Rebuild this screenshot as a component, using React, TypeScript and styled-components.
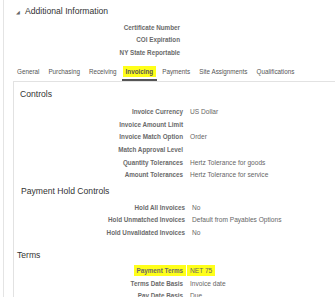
import styled, { createGlobalStyle } from 'styled-components';

const GlobalStyle = createGlobalStyle`
  html, body {
    margin: 0;
    padding: 0;
    background: #fff;
  }
  body {
    font-family: 'Liberation Sans', Arial, sans-serif;
    color: #444;
  }
`;

type Field = { label: string; value?: string; mark?: boolean };

const certFields: Field[] = [
  { label: 'Certificate Number' },
  { label: 'COI Expiration' },
  { label: 'NY State Reportable' },
];

const tabs = [
  'General',
  'Purchasing',
  'Receiving',
  'Invoicing',
  'Payments',
  'Site Assignments',
  'Qualifications',
];

const controls: Field[] = [
  { label: 'Invoice Currency', value: 'US Dollar' },
  { label: 'Invoice Amount Limit' },
  { label: 'Invoice Match Option', value: 'Order' },
  { label: 'Match Approval Level' },
  { label: 'Quantity Tolerances', value: 'Hertz Tolerance for goods' },
  { label: 'Amount Tolerances', value: 'Hertz Tolerance for service' },
];

const holds: Field[] = [
  { label: 'Hold All Invoices', value: 'No' },
  { label: 'Hold Unmatched Invoices', value: 'Default from Payables Options' },
  { label: 'Hold Unvalidated Invoices', value: 'No' },
];

const terms: Field[] = [
  { label: 'Payment Terms', value: 'NET 75', mark: true },
  { label: 'Terms Date Basis', value: 'Invoice date' },
  { label: 'Pay Date Basis', value: 'Due' },
];

type FieldsProps = { items: Field[]; labelWidth: number; step?: number; top?: number };

const Fields = ({ items, labelWidth, step = 12.5, top = 4 }: FieldsProps) => (
  <FieldGrid $labelWidth={labelWidth} $step={step} $top={top}>
    {items.map((f) => (
      <FieldRow key={f.label}>
        <Label>{f.mark ? <Mark>{f.label}</Mark> : f.label}</Label>
        <Value>{f.value && f.mark ? <Mark>{f.value}</Mark> : f.value}</Value>
      </FieldRow>
    ))}
  </FieldGrid>
);

const App = () => {
  return (
    <>
      <GlobalStyle />
      <Page>
        <Outer>
          <Header>
            <Caret>◢</Caret>
            Additional Information
          </Header>
          <Fields items={certFields} labelWidth={176} top={0} />
          <TabBar>
            {tabs.map((t) => (
              <Tab key={t} $active={t === 'Invoicing'}>
                {t === 'Invoicing' ? <Mark>{t}</Mark> : t}
              </Tab>
            ))}
          </TabBar>
          <Panel>
            <SectionTitle>Controls</SectionTitle>
            <Fields items={controls} labelWidth={169} step={12.6} top={6} />
            <SectionTitle $top={4} $indent={7}>Payment Hold Controls</SectionTitle>
            <Fields items={holds} labelWidth={171} />
            <SectionTitle $top={10} $indent={3}>Terms</SectionTitle>
            <Fields items={terms} labelWidth={169} />
          </Panel>
        </Outer>
      </Page>
    </>
  );
};

export default App;

const Page = styled.div`
  padding-left: 3px;
  height: 297px;
  overflow: hidden;
`;

const Outer = styled.div`
  border-left: 1px solid #e4e4e4;
  min-height: 297px;
`;

const Header = styled.div`
  display: flex;
  align-items: center;
  height: 21px;
  padding-left: 12px;
  font-size: 8.6px;
  color: #333;
`;

const Caret = styled.span`
  font-size: 5px;
  color: #666;
  margin-right: 5px;
  margin-top: 2px;
`;

const FieldGrid = styled.div<{ $labelWidth: number; $step: number; $top: number }>`
  display: grid;
  grid-template-columns: ${({ $labelWidth }) => $labelWidth}px 1fr;
  grid-auto-rows: ${({ $step }) => $step}px;
  column-gap: 7px;
  margin-top: ${({ $top }) => $top}px;
`;

const FieldRow = styled.div`
  display: contents;
`;

const Label = styled.div`
  display: flex;
  align-items: center;
  justify-content: flex-end;
  font-size: 6.3px;
  font-weight: bold;
  color: #6a6a6a;
  white-space: nowrap;
`;

const Value = styled.div`
  display: flex;
  align-items: center;
  font-size: 6.6px;
  color: #666;
  white-space: nowrap;
`;

const Mark = styled.span`
  background: #ffff1a;
  padding: 2px 3px;
  margin: 0 -3px;
`;

const TabBar = styled.div`
  display: flex;
  height: 16px;
  margin-top: 6px;
  padding-left: 9px;
  gap: 1px;
`;

const Tab = styled.div<{ $active?: boolean }>`
  display: flex;
  align-items: center;
  padding: 0 4px;
  font-size: 6.3px;
  color: #555;
  font-weight: ${({ $active }) => ($active ? 'bold' : 'normal')};
  border-bottom: 2px solid ${({ $active }) => ($active ? '#555' : 'transparent')};
  white-space: nowrap;
`;

const Panel = styled.div`
  margin-left: 9px;
  border-top: 1px solid #e2e2e2;
  border-left: 1px solid #e2e2e2;
  padding-top: 6px;
`;

const SectionTitle = styled.div<{ $top?: number; $indent?: number }>`
  height: 12px;
  line-height: 12px;
  margin-top: ${({ $top }) => $top ?? 0}px;
  padding-left: ${({ $indent }) => $indent ?? 6}px;
  font-size: 8.6px;
  color: #333;
`;
